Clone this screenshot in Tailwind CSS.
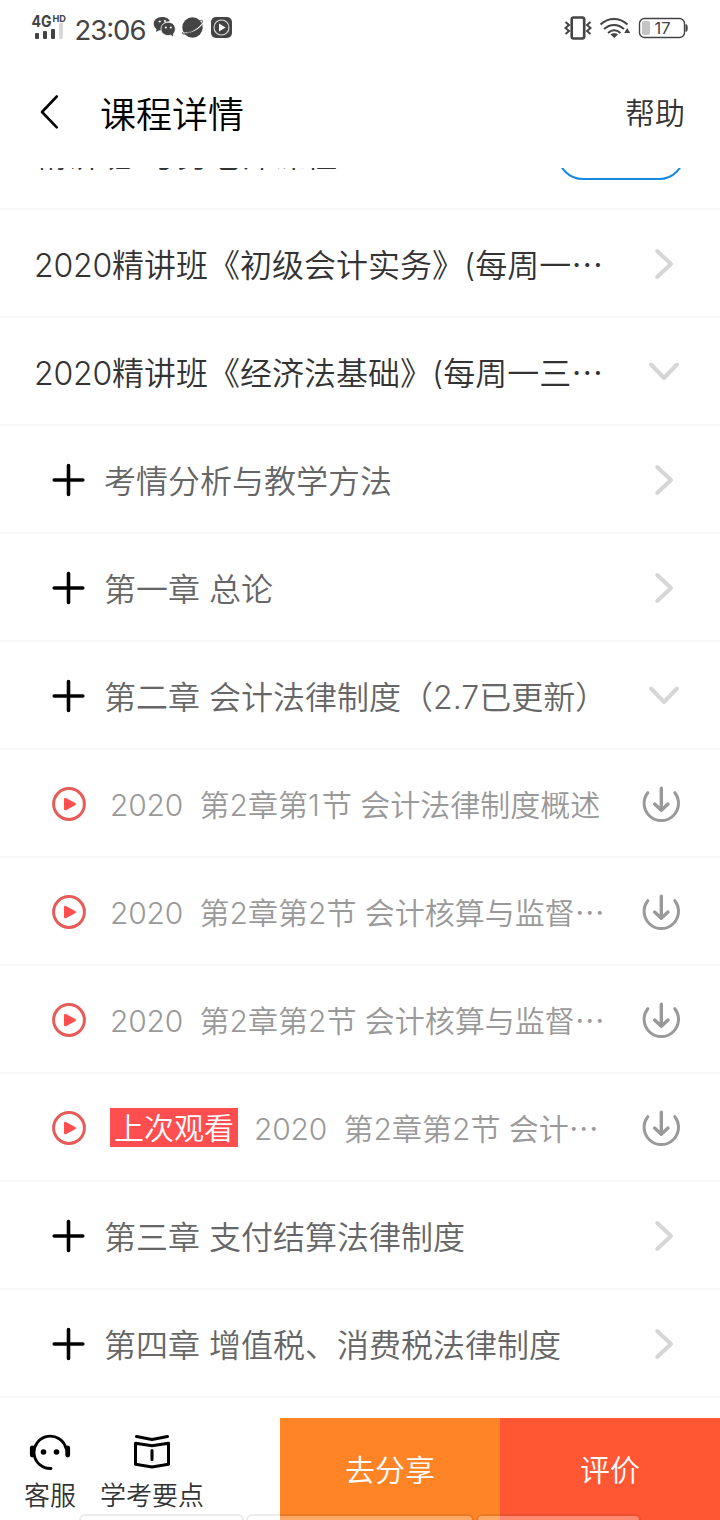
<!DOCTYPE html>
<html lang="zh-CN">
<head>
<meta charset="utf-8">
<title>课程详情</title>
<script src="https://cdn.jsdelivr.net/npm/@tailwindcss/browser@4"></script>
</head>
<body class="w-[720px] h-[1520px] overflow-hidden bg-white font-['Inter','Noto_Sans_CJK_SC',sans-serif] font-[350] text-[#333]">
<svg class="hidden">
  <symbol id="right" viewBox="0 0 36 36"><path d="M11.2 5 25 18 11.2 31" fill="none" stroke="#d6d6d6" stroke-width="4" stroke-linecap="round" stroke-linejoin="round"/></symbol>
  <symbol id="down" viewBox="0 0 36 36"><path d="M5 10.5 18 24 31 10.5" fill="none" stroke="#d6d6d6" stroke-width="4" stroke-linecap="round" stroke-linejoin="round"/></symbol>
  <symbol id="plus" viewBox="0 0 36 36"><path d="M18.5 3.5V32.500M4.200 18H32.800" fill="none" stroke="#000" stroke-width="3.6" stroke-linecap="round"/></symbol>
  <symbol id="play" viewBox="0 0 36 36"><circle cx="18" cy="18" r="15.4" fill="none" stroke="#e65c58" stroke-width="3"/><path d="M14.300 13.2v9.800l9.300-4.9z" fill="#ff4e50" stroke="#ff4e50" stroke-width="2.6" stroke-linejoin="round"/></symbol>
  <symbol id="load" viewBox="0 0 40 40"><path d="M6.8 8.7A17.2 17.2 0 1 0 33.8 8.7" fill="none" stroke="#999" stroke-width="3" stroke-linecap="round"/><path d="M20.3 4.3V25.7M13.6 20.1l6.7 6.2 6.7-6.2" fill="none" stroke="#999" stroke-width="3.4" stroke-linecap="round" stroke-linejoin="round"/></symbol>
</svg>
<div class="relative w-[720px] h-[1520px] flex flex-col overflow-hidden">
  <!-- status bar -->
  <div class="h-14 shrink-0 flex items-center justify-between font-normal text-[#444]">
    <svg class="w-[250px] h-14" viewBox="0 0 250 56" fill="#444">
      <text x="31.5" y="27" font-size="16" font-weight="700" textLength="20" lengthAdjust="spacingAndGlyphs">4G</text>
      <text x="52.5" y="22" font-size="9.5" font-weight="700" textLength="13.5" lengthAdjust="spacingAndGlyphs">HD</text>
      <rect x="35" y="33" width="4" height="6" rx="1"/><rect x="43" y="31" width="4" height="8" rx="1"/><rect x="51" y="29" width="4" height="10" rx="1"/><rect x="59" y="23" width="4" height="16" rx="1" fill="#d8d8d8"/>
      <text x="74.5" y="39.5" font-size="27.5" textLength="72">23:06</text>
      <path d="M162 17c-5 0-8.300 3-8.300 6.800 0 2.200 1.100 4 2.800 5.200l-.5 3 3.200-1.700 2.300.3c-.8-5.600 3-9.400 8.300-9.400-.8-2.600-4-4.200-7.800-4.200z"/>
      <path d="M168.300 22.300c-4.600 0-7.300 2.900-7.300 6.600 0 3.800 3 6.600 7.300 6.600l2.400-.3 2.600 2 .1-3.300c1.200-1.200 1.900-3 1.900-5 0-3.700-2.800-6.600-7-6.600z" stroke="#fff" stroke-width=".8"/>
      <g fill="#fff"><circle cx="159.700" cy="21.500" r="1.100"/><circle cx="165" cy="21" r="1.100"/><circle cx="165.800" cy="27.500" r="1"/><circle cx="170.800" cy="27.500" r="1"/></g>
      <circle cx="192.500" cy="27.500" r="10.200"/><path d="M183 33.500c7 0 17-5 19.500-11" fill="none" stroke="#fff" stroke-width="1.400"/>
      <path d="M200.500 20.500c2.300-.7 2.800.8 1 3-3.500 4.500-12 9.500-17.500 10.500-2 .2-2-1-1-2" fill="none" stroke="#444" stroke-width="1"/>
      <rect x="211" y="17" width="21" height="21" rx="5"/><circle cx="221.500" cy="27.500" r="7.500" fill="none" stroke="#ddd" stroke-width="1.100"/><path d="M219 23.500v8l6.500-4z" fill="#fff"/>
    </svg>
    <svg class="w-[180px] h-14" viewBox="540 0 180 56" fill="none" stroke="#444">
      <rect x="571.700" y="17.500" width="12.500" height="21" rx="2" stroke-width="2.600"/>
      <path d="M565.500 22l3.500 3-3.500 3 3.500 3-3.500 3M590.500 22l-3.500 3 3.500 3-3.500 3 3.500 3" stroke-width="2"/>
      <path d="M600.500 24.500c8-7.500 19-7.500 27 0M604 29c6-5.500 14-5.500 20 0M608 33c4-3.500 8.500-3.500 12.500 0" stroke-width="2"/>
      <path d="M610.500 34.500c2-1.600 5.500-1.600 7.500 0l-3.700 3.500zM627.200 28l3 5h-6z" fill="#444" stroke="none"/>
      <rect x="639.500" y="18.500" width="45" height="19" rx="5" stroke-width="1.400"/><rect x="642" y="21" width="8" height="14" rx="2" fill="#c4c4c4" stroke="none"/>
      <path d="M685.500 24c2 .5 2.200 1.500 2.200 4s-.2 3.500-2.200 4z" fill="#444" stroke="none"/>
      <text x="654.500" y="34" font-size="16.500" fill="#444" stroke="none">17</text>
    </svg>
  </div>
  <!-- title bar -->
  <div class="h-28 shrink-0 flex items-center pl-[34px] pr-[35px]">
    <svg class="w-8 h-10" viewBox="0 0 32 40"><path d="M22.800 4.500 8 20l14.800 15.300" fill="none" stroke="#000" stroke-width="2.600" stroke-linecap="round" stroke-linejoin="round"/></svg>
    <h1 class="ml-[34px] pt-1.5 text-4xl text-black">课程详情</h1>
    <span class="ml-auto pt-0.5 text-[30px]">帮助</span>
  </div>
  <!-- course list -->
  <div class="h-[42px] shrink-0 overflow-hidden flex items-start justify-between pl-[35px] pr-[35px] border-b-2 border-[#f7f7f7]">
    <span class="-mt-[36px] h-12 leading-[48px] text-[32px] whitespace-pre">精讲班<span class="inline-block w-[14px]"></span>考务老师课程</span>
    <span class="-mt-[40px] w-32 h-[52px] rounded-full border-2 border-[#1989dc]"></span>
  </div>
  <div class="h-[108px] shrink-0 flex items-center border-b-2 border-[#f7f7f7] pl-[34px] pr-[38px] text-[32px] whitespace-pre pt-0.5"><span class="leading-[48px] pt-1"><span class="tracking-[-0.2px]">2020</span>精讲班《初级会计实务》(每周一<span class="font-['Noto_Sans_CJK_SC'] leading-none">…</span></span><svg class="ml-auto size-9"><use href="#right"/></svg></div>
  <div class="h-[108px] shrink-0 flex items-center border-b-2 border-[#f7f7f7] pl-[34px] pr-[38px] text-[32px] whitespace-pre pt-0.5"><span class="leading-[48px] pt-1"><span class="tracking-[-0.2px]">2020</span>精讲班《经济法基础》(每周一三<span class="font-['Noto_Sans_CJK_SC'] leading-none">…</span></span><svg class="ml-auto size-9"><use href="#down"/></svg></div>
  <div class="h-[108px] shrink-0 flex items-center border-b-2 border-[#f7f7f7] pl-[50px] pr-[38px] text-[32px] text-[#666] whitespace-pre pt-0.5"><svg class="size-9 mr-[18px]"><use href="#plus"/></svg><span class="leading-[48px] pt-1">考情分析与教学方法</span><svg class="ml-auto size-9"><use href="#right"/></svg></div>
  <div class="h-[108px] shrink-0 flex items-center border-b-2 border-[#f7f7f7] pl-[50px] pr-[38px] text-[32px] text-[#666] whitespace-pre pt-0.5"><svg class="size-9 mr-[18px]"><use href="#plus"/></svg><span class="leading-[48px] pt-1">第一章 总论</span><svg class="ml-auto size-9"><use href="#right"/></svg></div>
  <div class="h-[108px] shrink-0 flex items-center border-b-2 border-[#f7f7f7] pl-[50px] pr-[38px] text-[32px] text-[#666] whitespace-pre pt-0.5"><svg class="size-9 mr-[18px]"><use href="#plus"/></svg><span class="leading-[48px] pt-1">第二章 会计法律制度（2.7已更新）</span><svg class="ml-auto size-9"><use href="#down"/></svg></div>
  <div class="h-[108px] shrink-0 flex items-center border-b-2 border-[#f7f7f7] pl-[51px] pr-[39px] text-[30px] text-[#999] whitespace-pre pt-0.5"><svg class="size-9 mr-[23px]"><use href="#play"/></svg><span class="leading-[48px] pt-0.5"><span class="tracking-[-0.2px]">2020  </span>第2章第<span class="tracking-[2px]">1</span>节 会计法律制度概述</span><svg class="ml-auto size-10"><use href="#load"/></svg></div>
  <div class="h-[108px] shrink-0 flex items-center border-b-2 border-[#f7f7f7] pl-[51px] pr-[39px] text-[30px] text-[#999] whitespace-pre pt-0.5"><svg class="size-9 mr-[23px]"><use href="#play"/></svg><span class="leading-[48px] pt-0.5"><span class="tracking-[-0.2px]">2020  </span>第2章第2节 会计核算与监督<span class="font-['Noto_Sans_CJK_SC'] leading-none">…</span></span><svg class="ml-auto size-10"><use href="#load"/></svg></div>
  <div class="h-[108px] shrink-0 flex items-center border-b-2 border-[#f7f7f7] pl-[51px] pr-[39px] text-[30px] text-[#999] whitespace-pre pt-0.5"><svg class="size-9 mr-[23px]"><use href="#play"/></svg><span class="leading-[48px] pt-0.5"><span class="tracking-[-0.2px]">2020  </span>第2章第2节 会计核算与监督<span class="font-['Noto_Sans_CJK_SC'] leading-none">…</span></span><svg class="ml-auto size-10"><use href="#load"/></svg></div>
  <div class="h-[108px] shrink-0 flex items-center border-b-2 border-[#f7f7f7] pl-[51px] pr-[39px] text-[30px] text-[#999] whitespace-pre pt-0.5"><svg class="size-9 mr-[23px]"><use href="#play"/></svg><span class="w-32 h-[39px] leading-[41px] text-center bg-[#ff4e50] text-white mr-4 mb-px">上次观看</span><span class="leading-[48px] pt-0.5"><span class="tracking-[-0.2px]">2020  </span>第2章第2节 会计<span class="font-['Noto_Sans_CJK_SC'] leading-none">…</span></span><svg class="ml-auto size-10"><use href="#load"/></svg></div>
  <div class="h-[108px] shrink-0 flex items-center border-b-2 border-[#f7f7f7] pl-[50px] pr-[38px] text-[32px] text-[#666] whitespace-pre pt-0.5"><svg class="size-9 mr-[18px]"><use href="#plus"/></svg><span class="leading-[48px] pt-1">第三章 支付结算法律制度</span><svg class="ml-auto size-9"><use href="#right"/></svg></div>
  <div class="h-[108px] shrink-0 flex items-center border-b-2 border-[#f7f7f7] pl-[50px] pr-[38px] text-[32px] text-[#666] whitespace-pre pt-0.5"><svg class="size-9 mr-[18px]"><use href="#plus"/></svg><span class="leading-[48px] pt-1">第四章 增值税、消费税法律制度</span><svg class="ml-auto size-9"><use href="#right"/></svg></div>
  <!-- bottom bar -->
  <div class="mt-5 h-[102px] shrink-0 flex">
    <div class="w-[280px] flex pl-6 pt-3 gap-6 text-[26px] leading-[38px]">
      <div class="flex flex-col items-center gap-[7px]">
        <svg class="w-11 h-10" viewBox="28 1430 44 40" fill="none" stroke="#000" stroke-linecap="round"><path d="M66 1448.500A16.200 16.200 0 1 0 51 1468.500" stroke-width="2.800"/><path d="M32.300 1448v7M67.700 1448v7" stroke-width="4.800"/><circle cx="43.500" cy="1452" r="2.800" fill="#000" stroke="none"/><circle cx="56.500" cy="1452" r="2.800" fill="#000" stroke="none"/></svg>
        <span>客服</span>
      </div>
      <div class="flex flex-col items-center gap-[7px]">
        <svg class="w-11 h-10" viewBox="130 1430 44 40" fill="none" stroke="#000" stroke-width="3" stroke-linecap="round" stroke-linejoin="round"><path d="M136.500 1436.500 152 1439.500l15.500-3M135.500 1443.300l16.500 2.500 16.500-2.500v21l-16.500 2.700-16.500-2.700zM152 1450.500v9"/></svg>
        <span>学考要点</span>
      </div>
    </div>
    <div class="w-[220px] pt-0.5 bg-[#ff8426] text-white text-[30px] flex items-center justify-center">去分享</div>
    <div class="w-[220px] pt-0.5 bg-[#ff5734] text-white text-[30px] flex items-center justify-center">评价</div>
  </div>
  <!-- edges of the cards that peek over the bottom bar -->
  <div class="absolute left-[79px] top-[1514px] flex gap-[2px]">
    <div class="w-[165px] h-5 rounded-md border-2 border-black/8 bg-white/30 bg-clip-padding"></div>
    <div class="w-[228px] h-5 rounded-md border-2 border-black/8 bg-white/30 bg-clip-padding"></div>
    <div class="w-[165px] h-5 rounded-md border-2 border-black/8 bg-white/30 bg-clip-padding"></div>
  </div>
</div>
</body>
</html>
